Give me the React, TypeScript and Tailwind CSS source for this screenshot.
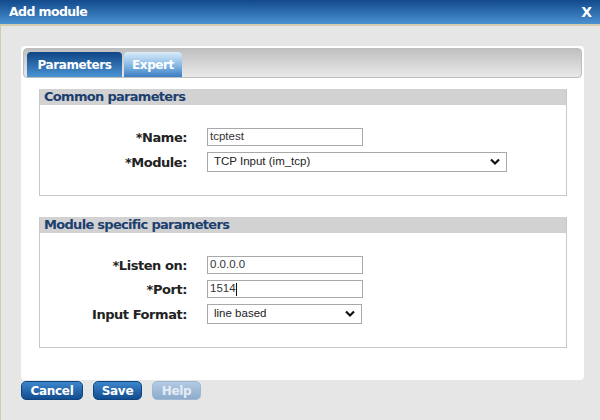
import React from "react";

const verdana = { fontFamily: '"DejaVu Sans", Verdana, sans-serif' };
const tahoma = { fontFamily: '"Liberation Sans", Tahoma, Arial, sans-serif' };

function Chevron() {
  return (
    <svg width="10" height="8" viewBox="0 0 10 8" className="shrink-0">
      <path d="M1 1.5 L5 5.5 L9 1.5" fill="none" stroke="#111" strokeWidth="2.2" />
    </svg>
  );
}

function TextBox({ value, caret }: { value: string; caret?: boolean }) {
  return (
    <div
      className="w-[156px] h-[18px] border border-[#a9a9a9] bg-white flex items-center pl-[2px] text-[11.5px] text-[#333]"
      style={tahoma}
    >
      {value}
      {caret && <span className="inline-block w-px h-[13px] bg-[#111]" />}
    </div>
  );
}

function Select({ value, width }: { value: string; width: string }) {
  return (
    <div
      className={`${width} h-[20px] border border-[#a9a9a9] bg-white flex items-center justify-between pl-[6px] pr-[6px] text-[11.5px] text-[#222]`}
      style={tahoma}
    >
      <span>{value}</span>
      <Chevron />
    </div>
  );
}

function Row({ label, children }: { label: string; children: React.ReactNode }) {
  return (
    <div className="flex items-center gap-[20px]">
      <div
        className="w-[147px] text-right font-bold text-[13px] tracking-[-0.45px] text-[#222] leading-none"
        style={verdana}
      >
        {label}
      </div>
      {children}
    </div>
  );
}

function Section({ title, children }: { title: string; children: React.ReactNode }) {
  return (
    <div className="border border-[#c8c8c8] border-t-0">
      <div
        className="h-[16px] bg-[#d2d2d2] px-[4px] font-bold text-[13px] tracking-[-0.7px] leading-[16px] text-[#1c3f6e]"
        style={verdana}
      >
        {title}
      </div>
      <div className="pt-[23px] pb-[23px] flex flex-col gap-[6px]">{children}</div>
    </div>
  );
}

export default function App() {
  return (
    <div className="w-[600px] h-[420px] bg-[#e6e6e6] flex flex-col overflow-hidden">
      <div className="h-[24px] bg-gradient-to-b from-[#124a8c] to-[#4a92d2] flex items-center justify-between pl-[9px] pr-[8px]">
        <span className="text-white font-bold text-[12.5px] tracking-[-0.6px]" style={verdana}>
          Add module
        </span>
        <span className="text-white font-bold text-[14px]" style={verdana}>
          X
        </span>
      </div>
      <div className="h-[2px] bg-[#d4ccb0]" />
      <div className="flex-1 border-l border-[#d4cca8] pl-[20px] pr-[16px] pt-[20px]">
        <div className="bg-white rounded-[4px] p-[2px] pb-[32px] h-[334px]">
          <div className="h-[30px] rounded-[4px] border border-[#bdbdbd] bg-gradient-to-b from-[#c0c0c0] to-[#e9e9e9] flex items-end gap-[2px] pl-[3px]">
            <div
              className="w-[95px] h-[25px] rounded-t-[4px] bg-gradient-to-b from-[#0f4585] to-[#4a94d4] flex items-center justify-center text-white font-bold text-[12px] tracking-[-0.4px]"
              style={verdana}
            >
              Parameters
            </div>
            <div
              className="w-[58px] h-[25px] rounded-t-[4px] bg-gradient-to-b from-[#dcecf8] via-[#8bbce6] to-[#3b7dc2] flex items-center justify-center text-white font-bold text-[12px] tracking-[-0.4px]"
              style={verdana}
            >
              Expert
            </div>
          </div>
          <div className="mt-[11px] ml-[16px] mr-[15px] flex flex-col gap-[21px]">
            <Section title="Common parameters">
              <Row label="*Name:">
                <TextBox value="tcptest" />
              </Row>
              <Row label="*Module:">
                <Select value="TCP Input (im_tcp)" width="w-[300px]" />
              </Row>
            </Section>
            <Section title="Module specific parameters">
              <Row label="*Listen on:">
                <TextBox value="0.0.0.0" />
              </Row>
              <Row label="*Port:">
                <TextBox value="1514" caret />
              </Row>
              <Row label="Input Format:">
                <Select value="line based" width="w-[155px]" />
              </Row>
            </Section>
          </div>
        </div>
        <div className="mt-[1px] flex gap-[10px]">
          <button
            className="w-[62px] h-[19px] rounded-[5px] border border-[#0e4480] bg-gradient-to-b from-[#3d86cc] to-[#124c8e] text-white font-bold text-[12px] tracking-[-0.3px] leading-none"
            style={verdana}
          >
            Cancel
          </button>
          <button
            className="w-[49px] h-[19px] rounded-[5px] border border-[#0e4480] bg-gradient-to-b from-[#3d86cc] to-[#124c8e] text-white font-bold text-[12px] tracking-[-0.3px] leading-none"
            style={verdana}
          >
            Save
          </button>
          <button
            className="w-[49px] h-[19px] rounded-[5px] border border-[#9fb7d2] bg-gradient-to-b from-[#b3cae3] to-[#8eabcc] text-[#e4ecf5] font-bold text-[12px] tracking-[-0.3px] leading-none"
            style={verdana}
          >
            Help
          </button>
        </div>
      </div>
    </div>
  );
}
